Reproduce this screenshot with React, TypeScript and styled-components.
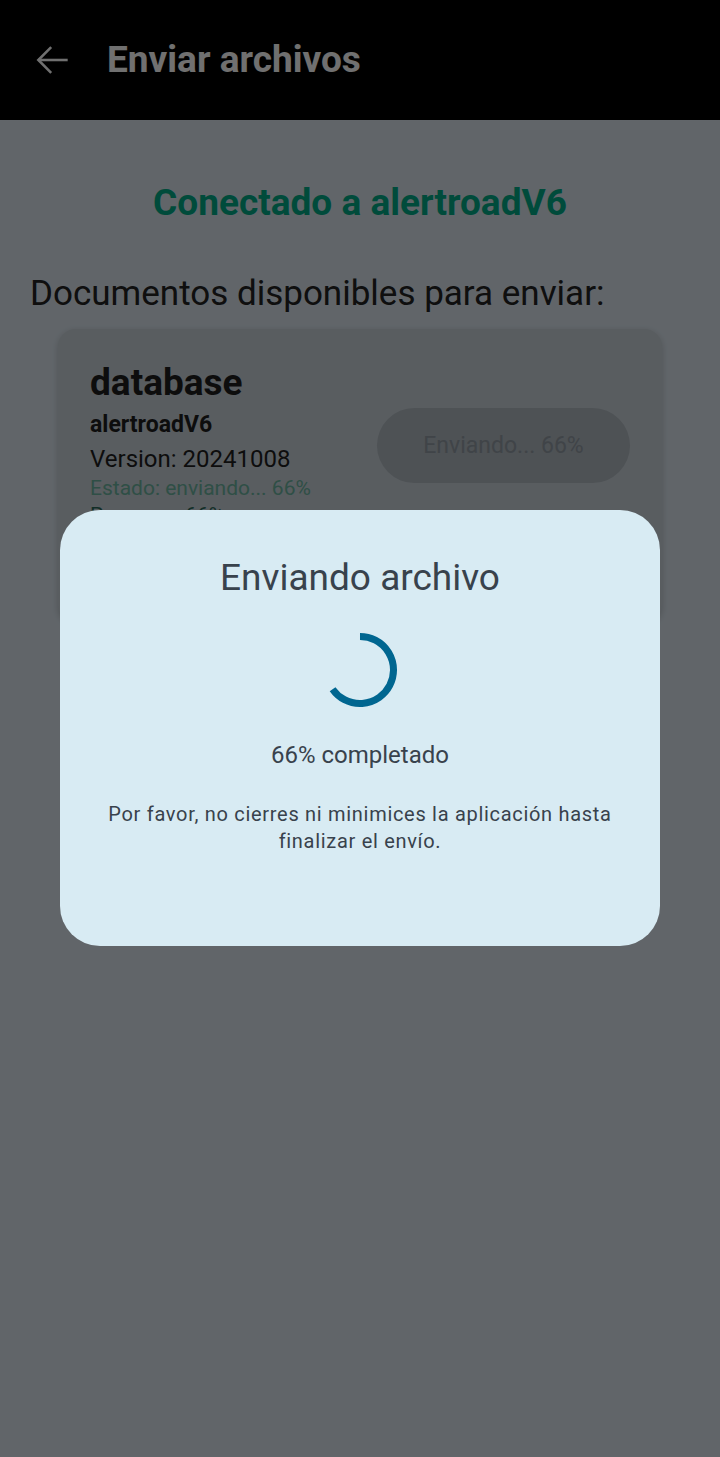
import styled, { createGlobalStyle } from "styled-components";

const GlobalStyle = createGlobalStyle`
  html, body {
    margin: 0;
    padding: 0;
  }
  body {
    font-family: Roboto, "Noto Sans", "Liberation Sans", sans-serif;
    background-color: #dce6ef;
  }
`;

const Screen = styled.div`
  position: relative;
  width: 720px;
  height: 1457px;
  overflow: hidden;
  background-color: #dce6ef;
`;

const TopBar = styled.header`
  height: 120px;
  background-color: #000000;
  display: flex;
  align-items: center;
  padding-left: 31px;
  gap: 32px;
`;

const BackButton = styled.button`
  width: 44px;
  height: 44px;
  padding: 0;
  border: none;
  background: none;
  display: flex;
  align-items: center;
  justify-content: center;
  color: #ffffff;
`;

const TopTitle = styled.h1`
  margin: 0;
  font-size: 37px;
  font-weight: 700;
  color: #ffffff;
  padding-bottom: 2px;
`;

const Content = styled.main`
  padding: 61px 30px 0 30px;
  display: flex;
  flex-direction: column;
`;

const Connected = styled.h2`
  margin: 0;
  text-align: center;
  font-size: 37px;
  line-height: 44px;
  font-weight: 700;
  color: #00ab86;
`;

const SectionLabel = styled.p`
  margin: 48px 0 0 0;
  font-size: 35px;
  line-height: 42px;
  font-weight: 400;
  color: #222222;
`;

const DocCard = styled.section`
  margin: 14px 28px 0 28px;
  height: 294px;
  box-sizing: border-box;
  border-radius: 18px;
  background-color: #cad3da;
  box-shadow: 0 2px 6px rgba(0, 0, 0, 0.18);
  padding: 31px 32px 0 32px;
  display: flex;
  justify-content: space-between;
  align-items: flex-start;
`;

const DocInfo = styled.div`
  display: flex;
  flex-direction: column;
`;

const DocName = styled.div`
  font-size: 37px;
  font-weight: 700;
  color: #1e1e1e;
  line-height: 46px;
`;

const DocLine = styled.div<{ $size: number; $bold?: boolean; $color: string; $height: number }>`
  font-size: ${(p) => p.$size}px;
  font-weight: ${(p) => (p.$bold ? 700 : 400)};
  color: ${(p) => p.$color};
  line-height: ${(p) => p.$height}px;
`;

const SendButton = styled.button`
  margin-top: 48px;
  width: 253px;
  height: 75px;
  border: none;
  border-radius: 38px;
  background-color: #b1bac1;
  color: #929ba4;
  font-family: inherit;
  font-size: 23px;
  font-weight: 400;
`;

const Scrim = styled.div`
  position: absolute;
  inset: 0;
  background-color: rgba(0, 0, 0, 0.56);
  display: flex;
  justify-content: center;
  align-items: flex-start;
  padding-top: 510px;
`;

const Dialog = styled.div`
  width: 600px;
  height: 436px;
  box-sizing: border-box;
  border-radius: 40px;
  background-color: #d8ebf3;
  padding: 50px 40px 0 40px;
  display: flex;
  flex-direction: column;
  align-items: center;
  color: #38424c;
`;

const DialogTitle = styled.h3`
  margin: 0;
  font-size: 37px;
  font-weight: 400;
  line-height: 36px;
`;

const Spinner = styled.svg`
  margin-top: 34px;
  width: 80px;
  height: 80px;
`;

const Percent = styled.div`
  margin-top: 30px;
  font-size: 24px;
  line-height: 30px;
`;

const Notice = styled.p`
  margin: 31px 0 0 0;
  text-align: center;
  font-size: 20px;
  line-height: 27px;
  letter-spacing: 0.7px;
`;

export default function App() {
  return (
    <>
      <GlobalStyle />
      <Screen>
        <TopBar>
          <BackButton aria-label="Volver">
            <svg width="44" height="44" viewBox="0 0 24 24" fill="none" stroke="currentColor" strokeWidth="1.4">
              <path d="M20 12H4" />
              <path d="M11 5l-7 7 7 7" />
            </svg>
          </BackButton>
          <TopTitle>Enviar archivos</TopTitle>
        </TopBar>
        <Content>
          <Connected>Conectado a alertroadV6</Connected>
          <SectionLabel>Documentos disponibles para enviar:</SectionLabel>
          <DocCard>
            <DocInfo>
              <DocName>database</DocName>
              <DocLine $size={23} $bold $color="#1e1e1e" $height={38}>alertroadV6</DocLine>
              <DocLine $size={24} $color="#1e1e1e" $height={30}>Version: 20241008</DocLine>
              <DocLine $size={21} $color="#6bb49f" $height={28}>Estado: enviando... 66%</DocLine>
              <DocLine $size={21} $color="#2a6a5a" $height={26}>Progreso: 66%</DocLine>
            </DocInfo>
            <SendButton disabled>Enviando... 66%</SendButton>
          </DocCard>
        </Content>
        <Scrim>
          <Dialog>
            <DialogTitle>Enviando archivo</DialogTitle>
            <Spinner viewBox="0 0 80 80">
              <path
                d="M40 6.5 A33.5 33.5 0 1 1 12.56 59.2"
                fill="none"
                stroke="#006690"
                strokeWidth="7"
              />
            </Spinner>
            <Percent>66% completado</Percent>
            <Notice>
              Por favor, no cierres ni minimices la aplicación hasta
              <br />
              finalizar el envío.
            </Notice>
          </Dialog>
        </Scrim>
      </Screen>
    </>
  );
}
